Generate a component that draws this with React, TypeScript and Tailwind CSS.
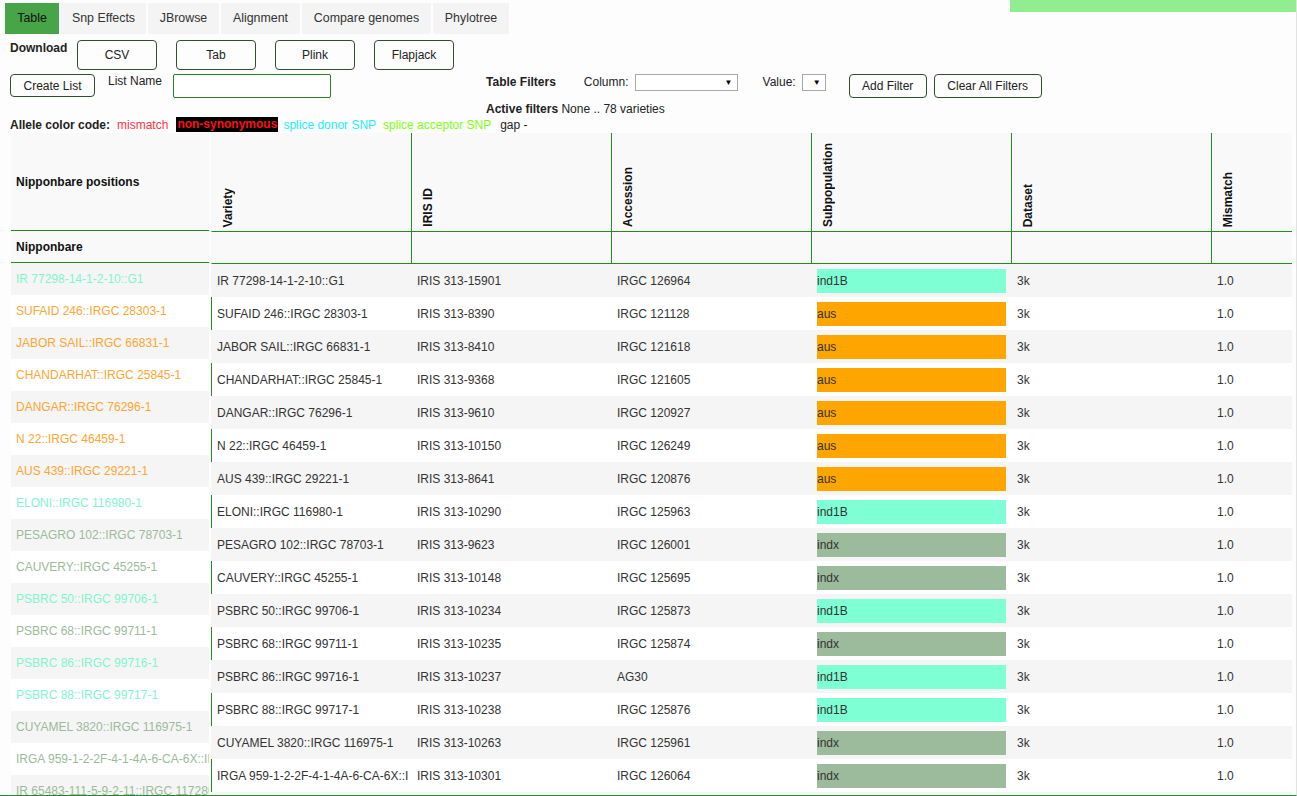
import React from 'react';

type Sub = 'ind1B' | 'aus' | 'indx';

const rows: [string, string, string, Sub][] = [
  ['IR 77298-14-1-2-10::G1', 'IRIS 313-15901', 'IRGC 126964', 'ind1B'],
  ['SUFAID 246::IRGC 28303-1', 'IRIS 313-8390', 'IRGC 121128', 'aus'],
  ['JABOR SAIL::IRGC 66831-1', 'IRIS 313-8410', 'IRGC 121618', 'aus'],
  ['CHANDARHAT::IRGC 25845-1', 'IRIS 313-9368', 'IRGC 121605', 'aus'],
  ['DANGAR::IRGC 76296-1', 'IRIS 313-9610', 'IRGC 120927', 'aus'],
  ['N 22::IRGC 46459-1', 'IRIS 313-10150', 'IRGC 126249', 'aus'],
  ['AUS 439::IRGC 29221-1', 'IRIS 313-8641', 'IRGC 120876', 'aus'],
  ['ELONI::IRGC 116980-1', 'IRIS 313-10290', 'IRGC 125963', 'ind1B'],
  ['PESAGRO 102::IRGC 78703-1', 'IRIS 313-9623', 'IRGC 126001', 'indx'],
  ['CAUVERY::IRGC 45255-1', 'IRIS 313-10148', 'IRGC 125695', 'indx'],
  ['PSBRC 50::IRGC 99706-1', 'IRIS 313-10234', 'IRGC 125873', 'ind1B'],
  ['PSBRC 68::IRGC 99711-1', 'IRIS 313-10235', 'IRGC 125874', 'indx'],
  ['PSBRC 86::IRGC 99716-1', 'IRIS 313-10237', 'AG30', 'ind1B'],
  ['PSBRC 88::IRGC 99717-1', 'IRIS 313-10238', 'IRGC 125876', 'ind1B'],
  ['CUYAMEL 3820::IRGC 116975-1', 'IRIS 313-10263', 'IRGC 125961', 'indx'],
  ['IRGA 959-1-2-2F-4-1-4A-6-CA-6X::IRGC 117272-1', 'IRIS 313-10301', 'IRGC 126064', 'indx'],
  ['IR 65483-111-5-9-2-11::IRGC 117280-1', 'IRIS 313-10302', 'IRGC 126065', 'indx'],
];

const barBg: Record<Sub, string> = {
  ind1B: 'bg-[#7fffd4]',
  aus: 'bg-[#ffa500]',
  indx: 'bg-[#9cba9c]',
};

const nameColor: Record<Sub, string> = {
  ind1B: 'text-[#7ff5d0]',
  aus: 'text-[#ffa530]',
  indx: 'text-[#9cba9c]',
};

const tabs = [
  { label: 'Table', w: 'w-[54px]', active: true },
  { label: 'Snp Effects', w: 'w-[85px]' },
  { label: 'JBrowse', w: 'w-[71px]' },
  { label: 'Alignment', w: 'w-[79px]' },
  { label: 'Compare genomes', w: 'w-[129px]' },
  { label: 'Phylotree', w: 'w-[76px]' },
];

const columns = ['Variety', 'IRIS ID', 'Accession', 'Subpopulation', 'Dataset', 'Mismatch'];

const Btn = ({ label, className }: { label: string; className: string }) => (
  <button className={`border border-[#2f4f2f] rounded-[4px] bg-[#fdfdfd] text-[12px] text-[#222] flex items-center justify-center ${className}`}>
    {label}
  </button>
);

const Select = ({ className }: { className: string }) => (
  <div className={`h-[17px] border border-[#a9a9a9] bg-white flex items-center justify-end pr-[4px] text-[8px] text-black ${className}`}>
    ▼
  </div>
);

export default function App() {
  return (
    <div className="w-[1297px] h-[796px] overflow-hidden bg-[#fdfdfd] border-r border-b border-r-[#e2e2e2] border-b-[#228b22] font-['Liberation_Sans',Arial,sans-serif] text-[12px] text-[#333] flex flex-col">
      {/* Tabs */}
      <div className="flex items-start">
        <div className="flex gap-[2px] ml-[5px] mt-[3px]">
          {tabs.map((t) => (
            <div
              key={t.label}
              className={`${t.w} h-[31px] flex items-center justify-center text-[12.4px] ${
                t.active ? 'bg-[#47a447] text-[#111]' : 'bg-[#f4f4f4] text-[#333]'
              }`}
            >
              {t.label}
            </div>
          ))}
        </div>
        <div className="ml-auto w-[286px] h-[12px] bg-[#90ee90]" />
      </div>

      {/* Download */}
      <div className="flex items-start mt-[6px]">
        <div className="w-[77px] pl-[10px] pt-[1px] leading-[14px] font-bold text-[#222]">Download</div>
        <div className="flex gap-[19px]">
          <Btn label="CSV" className="w-[80px] h-[30px]" />
          <Btn label="Tab" className="w-[80px] h-[30px]" />
          <Btn label="Plink" className="w-[80px] h-[30px]" />
          <Btn label="Flapjack" className="w-[80px] h-[30px]" />
        </div>
      </div>

      {/* List + filters */}
      <div className="flex items-start mt-[3px]">
        <Btn label="Create List" className="ml-[10px] mt-[1px] w-[85px] h-[23px]" />
        <div className="ml-[13px] mt-[1px] leading-[14px] text-[#222]">List Name</div>
        <div className="ml-[11px] mt-[1px] w-[158px] h-[24px] border border-[#2b7a2b] rounded-[2px] bg-white" />
        <div className="ml-[155px] flex flex-col">
          <div className="flex items-start">
            <div className="mt-[2px] leading-[14px] font-bold text-[#222]">Table Filters</div>
            <div className="ml-[28px] mt-[2px] leading-[14px] text-[#222]">Column:</div>
            <Select className="ml-[6px] mt-[1px] w-[103px]" />
            <div className="ml-[25px] mt-[2px] leading-[14px] text-[#222]">Value:</div>
            <Select className="ml-[6px] mt-[1px] w-[24px]" />
            <Btn label="Add Filter" className="ml-[23px] mt-[1px] w-[78px] h-[24px]" />
            <Btn label="Clear All Filters" className="ml-[7px] mt-[1px] w-[108px] h-[24px]" />
          </div>
          <div className="mt-[4px] leading-[14px] text-[#222]">
            <span className="font-bold">Active filters</span> None .. 78 varieties
          </div>
        </div>
      </div>

      {/* Allele color code */}
      <div className="flex items-center mt-[1px] ml-[10px] h-[15px] leading-[14px]">
        <span className="font-bold text-[#222]">Allele color code:</span>
        <span className="ml-[7px] text-[#ff3344]">mismatch</span>
        <span className="ml-[8px] bg-black text-[#ff1010] font-bold px-[1px] h-[15px] leading-[15px]">non-synonymous</span>
        <span className="ml-[5px] text-[#22eeff]">splice donor SNP</span>
        <span className="ml-[7px] text-[#80ff10]">splice acceptor SNP</span>
        <span className="ml-[9px] text-[#222]">gap -</span>
      </div>

      {/* Table */}
      <div className="flex items-start mt-[1px] ml-[11px]">
        {/* frozen column */}
        <div className="w-[198px] flex flex-col shrink-0">
          <div className="h-[98px] bg-[#f9f9f9] border-b border-[#228b22] flex items-center pl-[5px] font-bold text-[#111]">
            Nipponbare positions
          </div>
          <div className="h-[32px] bg-[#f9f9f9] border-b border-[#228b22] flex items-center pl-[5px] font-bold text-[#111]">
            Nipponbare
          </div>
          {rows.map((r, i) => (
            <div
              key={r[0]}
              className={`h-[32px] flex items-center pl-[5px] whitespace-nowrap overflow-hidden ${
                i % 2 === 0 ? 'bg-[#f5f5f5]' : 'bg-white'
              } ${nameColor[r[3]]}`}
            >
              {r[0]}
            </div>
          ))}
        </div>

        {/* main grid */}
        <div className="ml-[2px] w-[1081px] overflow-hidden shrink-0">
          <div className="w-[1201px] flex flex-col">
            <div className="flex h-[99px] bg-[#f9f9f9] border-l border-l-[#f9f9f9] border-b border-b-[#228b22]">
              {columns.map((c) => (
                <div key={c} className="w-[200px] border-r border-[#228b22] flex items-end pl-[9px] pb-[4px]">
                  <span className="[writing-mode:vertical-rl] rotate-180 leading-[14px] font-bold text-[#111]">{c}</span>
                </div>
              ))}
            </div>
            <div className="flex h-[32px] bg-[#f9f9f9] border-l border-l-[#f9f9f9] border-b border-b-[#228b22]">
              {columns.map((c) => (
                <div key={c} className="w-[200px] border-r border-[#228b22]" />
              ))}
            </div>
            {rows.map((r, i) => (
              <div
                key={r[0]}
                className={`flex h-[33px] items-center border-l ${
                  i % 2 === 0 ? 'bg-[#f5f5f5] border-l-[#f5f5f5]' : 'bg-white border-l-[#228b22]'
                }`}
              >
                <div className="w-[200px] pl-[5px] pr-[3px]">
                  <div className="whitespace-nowrap overflow-hidden">{r[0]}</div>
                </div>
                <div className="w-[200px] pl-[5px]">{r[1]}</div>
                <div className="w-[200px] pl-[5px]">{r[2]}</div>
                <div className="w-[200px] pl-[5px]">
                  <div className={`w-[189px] h-[24px] flex items-center ${barBg[r[3]]}`}>{r[3]}</div>
                </div>
                <div className="w-[200px] pl-[5px]">3k</div>
                <div className="w-[200px] pl-[5px]">1.0</div>
              </div>
            ))}
          </div>
        </div>
      </div>
    </div>
  );
}
